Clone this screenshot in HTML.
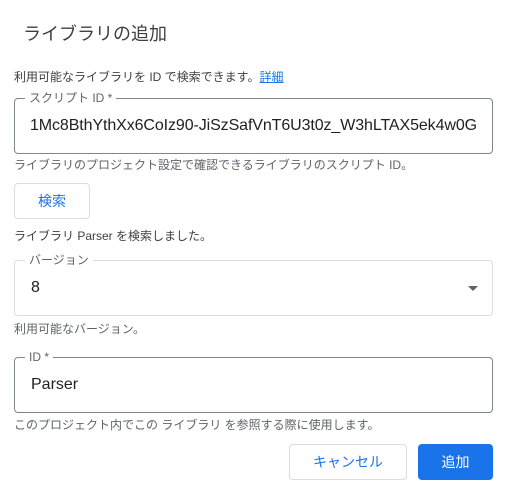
<!DOCTYPE html><html><head><meta charset="utf-8"><style>
body{margin:0;width:509px;height:492px;background:#fff;font-family:"Liberation Sans","Noto Sans CJK JP",sans-serif;position:relative;overflow:hidden}
.a{position:absolute;white-space:nowrap}
.t{left:23px;top:20px;font-size:18px;color:#3c4043}
.s{font-size:12px;color:#5f6368;left:14px}
.f{position:absolute;left:14px;width:477px;height:54px;border:1px solid #80868b;border-radius:4px;box-sizing:content-box}
.l{position:absolute;left:10px;top:-9px;background:#fff;padding:0 4px;font-size:12px;color:#5f6368;line-height:16px}
.v{position:absolute;left:16px;top:16px;font-size:16px;color:#202124;line-height:20px}
.b{position:absolute;height:34px;border:1px solid #dadce0;border-radius:4px;font-size:14px;color:#1a73e8;text-align:center;line-height:34px;background:#fff}
</style></head><body>
<div class="a t">ライブラリの追加</div>
<div class="a s" style="top:68px;color:#3c4043">利用可能なライブラリを ID で検索できます。<span style="text-decoration:underline;color:#1a73e8">詳細</span></div>
<div class="f" style="top:98px"><div class="l">スクリプト ID *</div><div class="v" style="top:17px;left:15px;letter-spacing:-0.1px">1Mc8BthYthXx6CoIz90-JiSzSafVnT6U3t0z_W3hLTAX5ek4w0G</div></div>
<div class="a s" style="top:156px">ライブラリのプロジェクト設定で確認できるライブラリのスクリプト ID。</div>
<div class="b" style="left:14px;top:183px;width:74px">検索</div>
<div class="a s" style="top:227px;color:#3c4043">ライブラリ Parser を検索しました。</div>
<div class="f" style="top:260px;border-color:#dadce0"><div class="l">バージョン</div><div class="v" style="top:17px">8</div>
<div style="position:absolute;right:14px;top:25px;width:0;height:0;border-left:5px solid transparent;border-right:5px solid transparent;border-top:5px solid #5f6368"></div></div>
<div class="a s" style="top:320px">利用可能なバージョン。</div>
<div class="f" style="top:357px"><div class="l">ID *</div><div class="v" style="top:17px">Parser</div></div>
<div class="a s" style="top:416px">このプロジェクト内でこの ライブラリ を参照する際に使用します。</div>
<div class="b" style="left:289px;top:444px;width:116px">キャンセル</div>
<div class="b" style="left:418px;top:444px;width:73px;background:#1a73e8;border-color:#1a73e8;color:#fff">追加</div>
</body></html>
